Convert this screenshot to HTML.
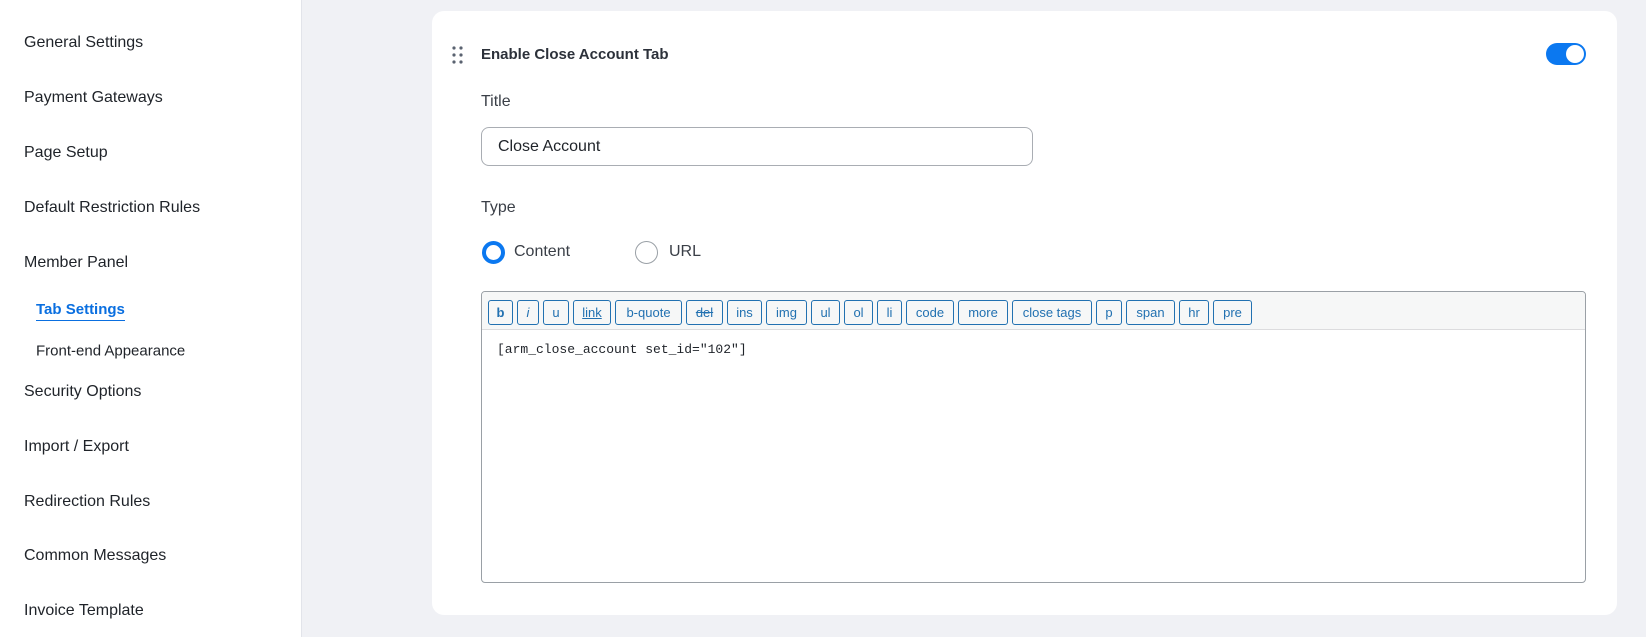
<!DOCTYPE html>
<html><head><meta charset="utf-8"><style>
*{box-sizing:border-box;margin:0;padding:0}
body{width:1646px;height:637px;background:#f0f1f5;font-family:"Liberation Sans",sans-serif;position:relative;overflow:hidden;color:#1f2329}
.side{position:absolute;left:0;top:0;width:302px;height:637px;background:#fff;border-right:1px solid #e2e4ea}
.si{position:absolute;left:24px;font-size:16px;color:#1f2329;transform:translateY(-50%)}
.sub{left:36px;font-size:15px}
.act{color:#0a6fe0;font-weight:bold;border-bottom:1.5px solid #0a6fe0;padding-bottom:2px}
.card{position:absolute;left:432px;top:11px;width:1185px;height:604px;background:#fff;border-radius:12px}
.a{position:absolute}
.lbl{font-size:16px;color:#3a3f47}
.tb{position:absolute;left:481px;top:291px;width:1105px;height:292px;border:1px solid #9aa0a6;border-radius:4px;overflow:hidden}
.bar{height:38px;background:#f6f7f7;border-bottom:1px solid #dcdcde;display:flex;gap:4px;padding:8px 0 0 6px}
.bt{height:25px;border:1px solid #2271b1;border-radius:3px;color:#2271b1;font-size:13px;display:flex;align-items:center;justify-content:center;background:#f6f7f7}
</style></head><body>
<div class="side">
<div class="si" style="top:43px">General Settings</div>
<div class="si" style="top:98px">Payment Gateways</div>
<div class="si" style="top:153px">Page Setup</div>
<div class="si" style="top:208px">Default Restriction Rules</div>
<div class="si" style="top:263px">Member Panel</div>
<div class="si sub act" style="top:311px">Tab Settings</div>
<div class="si sub" style="top:351px">Front-end Appearance</div>
<div class="si" style="top:392px">Security Options</div>
<div class="si" style="top:447px">Import / Export</div>
<div class="si" style="top:502px">Redirection Rules</div>
<div class="si" style="top:556px">Common Messages</div>
<div class="si" style="top:611px">Invoice Template</div>
</div>
<div class="card"></div>
<svg class="a" style="left:452px;top:46px" width="12" height="18"><g fill="#5a6270"><circle cx="2" cy="2" r="1.6"/><circle cx="9" cy="2" r="1.6"/><circle cx="2" cy="9" r="1.6"/><circle cx="9" cy="9" r="1.6"/><circle cx="2" cy="16" r="1.6"/><circle cx="9" cy="16" r="1.6"/></g></svg>
<div class="a" style="left:481px;top:46px;font-size:15px;font-weight:bold;color:#2c313a">Enable Close Account Tab</div>
<div class="a" style="left:1546px;top:43px;width:40px;height:22px;border-radius:11px;background:#0b78f0"><div style="position:absolute;right:1px;top:1px;width:20px;height:20px;border-radius:50%;background:#fff;border:1px solid #0b78f0"></div></div>
<div class="a lbl" style="left:481px;top:93px">Title</div>
<div class="a" style="left:481px;top:127px;width:552px;height:39px;border:1px solid #a9adb3;border-radius:8px;padding-left:16px;line-height:38px;font-size:16px;color:#1f2329">Close Account</div>
<div class="a lbl" style="left:481px;top:199px">Type</div>
<div class="a" style="left:482px;top:241px;width:23px;height:23px;border-radius:50%;border:4px solid #0b78f0"></div>
<div class="a lbl" style="left:514px;top:243px">Content</div>
<div class="a" style="left:635px;top:241px;width:23px;height:23px;border-radius:50%;border:1px solid #9aa0a6"></div>
<div class="a lbl" style="left:669px;top:243px">URL</div>
<div class="tb"><div class="bar">
<div class="bt" style="width:25px;font-weight:bold">b</div>
<div class="bt" style="width:22px;font-style:italic">i</div>
<div class="bt" style="width:26px">u</div>
<div class="bt" style="width:38px;text-decoration:underline">link</div>
<div class="bt" style="width:67px">b-quote</div>
<div class="bt" style="width:37px;text-decoration:line-through">del</div>
<div class="bt" style="width:35px">ins</div>
<div class="bt" style="width:41px">img</div>
<div class="bt" style="width:29px">ul</div>
<div class="bt" style="width:29px">ol</div>
<div class="bt" style="width:25px">li</div>
<div class="bt" style="width:48px">code</div>
<div class="bt" style="width:50px">more</div>
<div class="bt" style="width:80px">close tags</div>
<div class="bt" style="width:26px">p</div>
<div class="bt" style="width:49px">span</div>
<div class="bt" style="width:30px">hr</div>
<div class="bt" style="width:39px">pre</div>
</div>
<div style="padding:12px 15px;font-family:'Liberation Mono',monospace;font-size:13px;color:#1f2329">[arm_close_account set_id="102"]</div>
</div>
</body></html>
